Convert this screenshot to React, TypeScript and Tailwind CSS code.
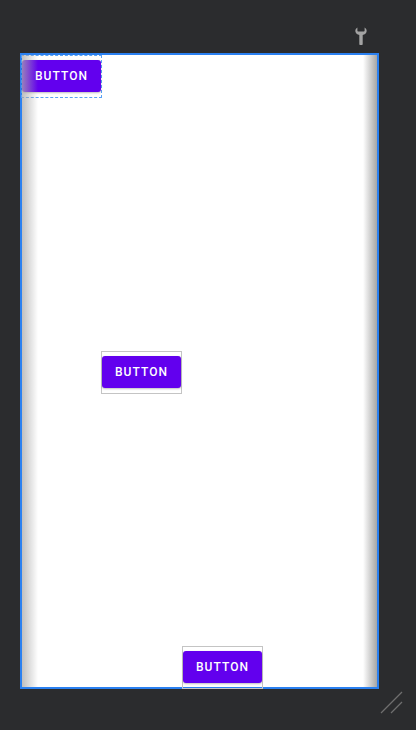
import React from "react";

/* ─── Layout editor preview: one device canvas with three constrained buttons ─── */

const BUTTONS = [
  { id: "b1", box: "left-[-1px] top-0", selected: true },
  { id: "b2", box: "left-[79px] top-[296px]", selected: false },
  { id: "b3", box: "left-[160px] top-[591px]", selected: false },
];

function Wrench() {
  return (
    <svg width="12" height="18" viewBox="0 0 12 18" className="block">
      <path
        d="M2.4 0.6 C0.6 1.6 0 3.4 0.5 5.1 C1 6.6 2.4 7.7 4.3 8 L4.3 17 C4.3 17.6 4.7 18 5.3 18 L6.7 18 C7.3 18 7.7 17.6 7.7 17 L7.7 8 C9.6 7.7 11 6.6 11.5 5.1 C12 3.4 11.4 1.6 9.6 0.6 L9.6 3.6 C9.6 4.2 9.2 4.6 8.6 4.6 L3.4 4.6 C2.8 4.6 2.4 4.2 2.4 3.6 Z"
        fill="#a3a3a3"
      />
    </svg>
  );
}

function ResizeHandle() {
  return (
    <svg width="26" height="24" viewBox="0 0 26 24" className="block">
      <line x1="1" y1="22" x2="22" y2="1" stroke="#6f6f6f" strokeWidth="1.3" />
      <line x1="11" y1="22" x2="22" y2="11" stroke="#6f6f6f" strokeWidth="1.3" />
    </svg>
  );
}

function MaterialButton() {
  return (
    <div className="flex h-[32px] w-[79px] items-center justify-center rounded-[3px] bg-[#6200ee] shadow-[0_1px_2px_rgba(0,0,0,0.25)]">
      <span className="font-['Roboto',sans-serif] text-[12px] font-medium tracking-[0.09em] text-white">
        BUTTON
      </span>
    </div>
  );
}

export default function App() {
  return (
    <div className="relative h-[730px] w-[416px] overflow-hidden bg-[#2b2c2e]">
      {/* toolbar icon */}
      <div className="flex justify-end pr-[49px] pt-[27px]">
        <Wrench />
      </div>

      {/* device canvas */}
      <div className="pl-[20px] pt-[8px]">
        <div className="relative h-[636px] w-[359px] border-2 border-[#2a80f0] bg-white">
          {BUTTONS.map((b) => (
            <div
              key={b.id}
              className={`absolute ${b.box} flex h-[43px] w-[81px] items-start justify-center pt-[4px] ${
                b.selected
                  ? "border border-dashed border-[#5aa2f5]"
                  : "border border-[#c4c4c4]"
              }`}
            >
              <MaterialButton />
            </div>
          ))}

          {/* edge shading */}
          <div className="pointer-events-none absolute inset-y-0 left-0 w-[16px] bg-gradient-to-r from-[rgba(170,170,170,0.75)] to-transparent" />
          <div className="pointer-events-none absolute inset-y-0 right-0 w-[14px] bg-gradient-to-l from-[rgba(150,150,150,0.85)] to-transparent" />
        </div>
      </div>

      <div className="flex justify-end pr-[10px] pt-[2px]">
        <ResizeHandle />
      </div>
    </div>
  );
}
